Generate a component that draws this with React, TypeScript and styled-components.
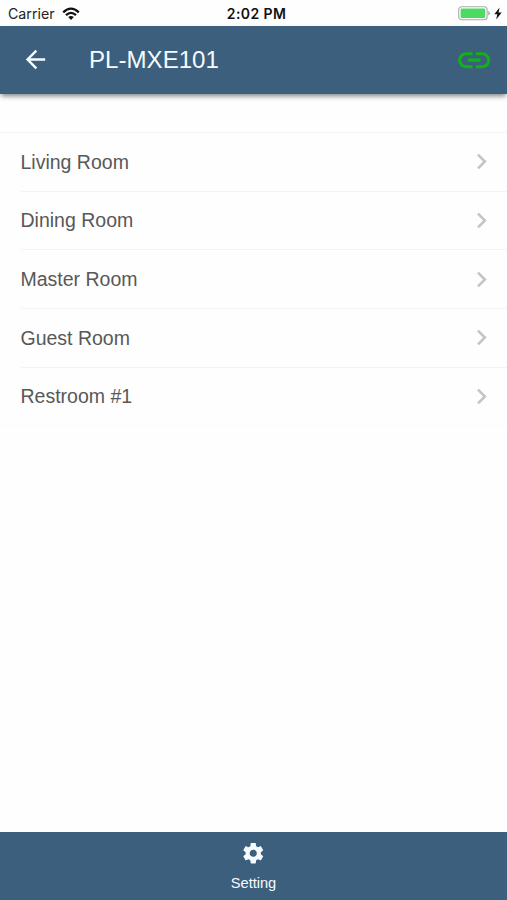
import React from "react";
import styled, { createGlobalStyle } from "styled-components";

const GlobalStyle = createGlobalStyle`
  *, *::before, *::after { box-sizing: border-box; }
  html, body { margin: 0; padding: 0; background: #fefefe; }
`;

const Screen = styled.div`
  display: flex;
  flex-direction: column;
  width: 507px;
  height: 900px;
  overflow: hidden;
  background: #fefefe;
  font-family: "Liberation Sans", Arial, sans-serif;
`;

const StatusBar = styled.div`
  display: grid;
  grid-template-columns: 1fr auto 1fr;
  align-items: center;
  flex: none;
  height: 25.5px;
  padding: 2px 5px 0 8px;
  font-family: Inter, sans-serif;
  font-size: 14.2px;
  line-height: 18px;
  color: #222;
`;

const Carrier = styled.div`
  display: flex;
  align-items: center;
  gap: 7px;
`;

const Clock = styled.div`
  padding-left: 3px;
  font-size: 14px;
  font-weight: 600;
  letter-spacing: 0.4px;
  color: #111;
`;

const Power = styled.div`
  display: flex;
  align-items: center;
  justify-content: flex-end;
  gap: 4px;
`;

const Header = styled.header`
  display: flex;
  align-items: center;
  flex: none;
  height: 68.5px;
  padding: 0 14px 0 21px;
  background: #3c5f7e;
  color: #f5fbff;
  box-shadow: 0 3px 5px -1px rgba(0, 0, 0, 0.5);
`;

const IconButton = styled.button`
  display: flex;
  padding: 0;
  border: 0;
  background: none;
  color: inherit;
`;

const Title = styled.h1`
  flex: 1;
  margin: 0 0 0 39px;
  font-size: 24.1px;
  font-weight: 400;
  line-height: 30px;
`;

const RoomList = styled.ul`
  flex: 1;
  margin: 38.4px 0 0;
  padding: 0;
  list-style: none;
`;

const Room = styled.li`
  height: 58.7px;
  padding-left: 21px;
  &:first-child { height: 59.2px; border-top: 1px solid #f3f3f3; }
  &:last-child { padding-left: 0; }
`;

const RoomBody = styled.div<{ $last: boolean }>`
  display: flex;
  align-items: center;
  justify-content: space-between;
  height: 100%;
  padding: 0 10px 0 ${(p) => (p.$last ? "21px" : "0")};
  border-bottom: 1px solid ${(p) => (p.$last ? "#fafafa" : "#f3f3f3")};
  font-size: 19.5px;
  line-height: 24px;
  color: #585858;
`;

const RoomName = styled.span`
  margin-left: -0.5px;
`;

const Footer = styled.footer`
  display: flex;
  flex-direction: column;
  align-items: center;
  flex: none;
  height: 68.5px;
  padding-top: 9px;
  background: #3c5f7e;
  color: #f5fbff;
`;

const TabLabel = styled.span`
  margin-top: 8.5px;
  font-size: 14.6px;
  line-height: 18px;
`;

const WifiIcon = () => (
  <svg width="18" height="14" viewBox="0 0 18 14" fill="none" stroke="#111" strokeWidth="2.3">
    <path d="M1.2 5.3Q9-2 16.8 5.3" />
    <path d="M4 8.2Q9 3.5 14 8.2" />
    <path d="M6.2 10.1Q9 7.7 11.8 10.1L9 13Z" fill="#111" stroke="none" />
  </svg>
);

const BatteryIcon = () => (
  <svg width="32" height="15" viewBox="0 0 32 15">
    <rect x="0.7" y="0.8" width="28.4" height="13" rx="3" fill="#fff" stroke="#a9aba9" strokeWidth="1.1" />
    <rect x="2.6" y="2.6" width="24.6" height="9.4" rx="1.3" fill="#4cd964" />
    <path d="M30.2 5q1.6.6 1.6 2.3t-1.6 2.3z" fill="#a9aba9" />
  </svg>
);

const BoltIcon = () => (
  <svg width="8" height="13" viewBox="0 0 8 13">
    <path d="M5.6.5.3 7.2h3L2.2 12.5 7.7 5.5H4.5z" fill="#111" />
  </svg>
);

type GlyphProps = { size: number; color?: string; d: string };

const Glyph = ({ size, color = "currentColor", d }: GlyphProps) => (
  <svg width={size} height={size} viewBox="0 0 24 24" fill={color}>
    <path d={d} />
  </svg>
);

const ARROW = "M20 11H7.83l5.59-5.59L12 4l-8 8 8 8 1.41-1.41L7.83 13H20v-2z";
const LINK =
  "M3.9 12c0-1.71 1.39-3.1 3.1-3.1h4V7H7c-2.76 0-5 2.24-5 5s2.24 5 5 5h4v-1.9H7c-1.71 0-3.1-1.39-3.1-3.1zM8 13h8v-2H8v2zm9-6h-4v1.9h4c1.71 0 3.1 1.39 3.1 3.1s-1.39 3.1-3.1 3.1h-4V17h4c2.76 0 5-2.24 5-5s-2.24-5-5-5z";
const CHEVRON = "M10 6 8.59 7.41 13.17 12l-4.58 4.59L10 18l6-6z";
const GEAR =
  "M19.43 12.98c.04-.32.07-.64.07-.98s-.03-.66-.07-.98l2.11-1.65c.19-.15.24-.42.12-.64l-2-3.46c-.12-.22-.39-.3-.61-.22l-2.49 1c-.52-.4-1.08-.73-1.69-.98l-.38-2.65C14.46 2.18 14.25 2 14 2h-4c-.25 0-.46.18-.49.42l-.38 2.65c-.61.25-1.17.59-1.69.98l-2.49-1c-.23-.09-.49 0-.61.22l-2 3.46c-.13.22-.07.49.12.64l2.11 1.65c-.04.32-.07.65-.07.98s.03.66.07.98l-2.11 1.65c-.19.15-.24.42-.12.64l2 3.46c.12.22.39.3.61.22l2.49-1c.52.4 1.08.73 1.69.98l.38 2.65c.03.24.24.42.49.42h4c.25 0 .46-.18.49-.42l.38-2.65c.61-.25 1.17-.59 1.69-.98l2.49 1c.23.09.49 0 .61-.22l2-3.46c.12-.22.07-.49-.12-.64l-2.11-1.65zM12 15.5c-1.93 0-3.5-1.57-3.5-3.5s1.57-3.5 3.5-3.5 3.5 1.57 3.5 3.5-1.57 3.5-3.5 3.5z";

const rooms = ["Living Room", "Dining Room", "Master Room", "Guest Room", "Restroom #1"];

export default function App() {
  return (
    <>
      <GlobalStyle />
      <Screen>
        <StatusBar>
          <Carrier>
            Carrier
            <WifiIcon />
          </Carrier>
          <Clock>2:02 PM</Clock>
          <Power>
            <BatteryIcon />
            <BoltIcon />
          </Power>
        </StatusBar>
        <Header>
          <IconButton aria-label="Back">
            <Glyph size={29} d={ARROW} />
          </IconButton>
          <Title>PL-MXE101</Title>
          <IconButton aria-label="Connection">
            <Glyph size={38.4} color="#0fb414" d={LINK} />
          </IconButton>
        </Header>
        <RoomList>
          {rooms.map((room, i) => (
            <Room key={room}>
              <RoomBody $last={i === rooms.length - 1}>
                <RoomName>{room}</RoomName>
                <Glyph size={31} color="#c4c4c4" d={CHEVRON} />
              </RoomBody>
            </Room>
          ))}
        </RoomList>
        <Footer>
          <Glyph size={24.5} d={GEAR} />
          <TabLabel>Setting</TabLabel>
        </Footer>
      </Screen>
    </>
  );
}
